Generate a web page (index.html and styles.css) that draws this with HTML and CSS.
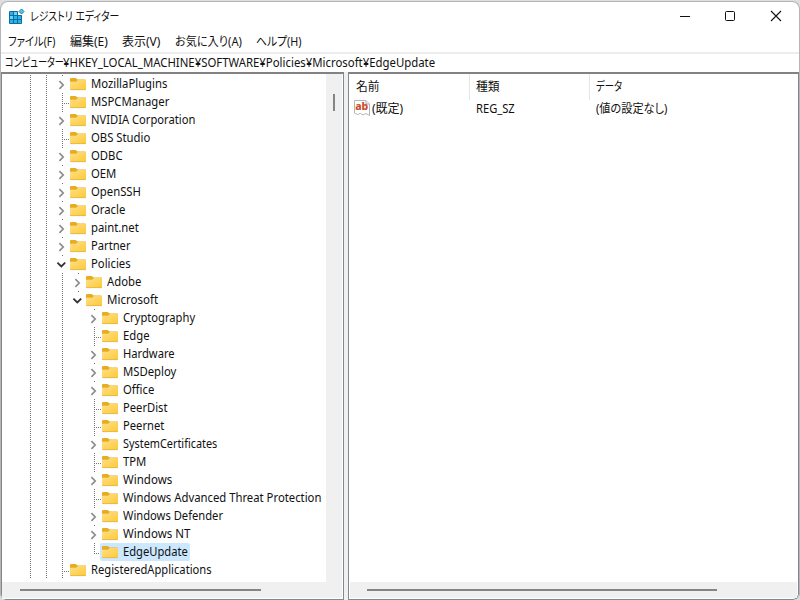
FILE: index.html
```html
<!DOCTYPE html>
<html lang="ja">
  <head>
    <meta charset="UTF-8" />
    <meta name="viewport" content="width=device-width, initial-scale=1.0" />
    <title>レジストリ エディター</title>
    <link rel="stylesheet" href="styles.css" />
  </head>
  <body>
    <svg class="defs" width="0" height="0">
      <defs>
        <linearGradient id="fold" x1="0" y1="0" x2="1" y2="1">
          <stop offset="0" stop-color="#ffe08a" />
          <stop offset="1" stop-color="#fcc936" />
        </linearGradient>
        <symbol id="folder" viewBox="0 0 16 16">
          <path d="M0 3.2Q0 2 1.2 2H5.6L7.6 3.6H15Q16 3.6 16 4.6V8H0Z" fill="#e8ac22" />
          <path d="M0 5.8H6L8 4H15.2Q16 4 16 4.9V13.2Q16 14 15.2 14H.8Q0 14 0 13.2Z" fill="url(#fold)" />
          <path d="M.3 13.6H15.7" stroke="#e3b23c" stroke-width=".8" />
        </symbol>
        <symbol id="closed" viewBox="0 0 16 18">
          <path d="M5.4 6.2L9.2 10L5.4 13.8" fill="none" stroke="#8c8c8c" stroke-width="1.7" />
        </symbol>
        <symbol id="open" viewBox="0 0 16 18">
          <path d="M3.4 7.6L7.3 11.4L11.2 7.6" fill="none" stroke="#333" stroke-width="1.8" />
        </symbol>
      </defs>
    </svg>

    <div class="window">
      <div class="titlebar">
        <svg class="app-icon" width="17" height="17" viewBox="0 0 17 17">
          <path d="M1.5 3.5H9.5V7.5H13.5V15.5H1.5Z" fill="#25b5ea" stroke="#126b9c" />
          <path d="M2 8H5V11H2ZM6 4H9V7H6Z" fill="#62d7fa" />
          <path d="M1.5 7.5H13.5M1.5 11.5H13.5M5.5 3.5V15.5M9.5 7V15.5" stroke="#126b9c" />
          <path d="M13.5 1L16 3.5L13.5 6L11 3.5Z" fill="#50c8ef" stroke="#237ba8" />
        </svg>
        <div class="title"><span>レジストリ エディター</span></div>
        <div class="controls">
          <svg width="45" height="28" viewBox="0 0 45 28">
            <path d="M17 14.5H27" stroke="#111" />
          </svg>
          <svg width="45" height="28" viewBox="0 0 45 28">
            <rect x="17.5" y="9.5" width="9" height="9" rx="1" fill="none" stroke="#111" />
          </svg>
          <svg width="45" height="28" viewBox="0 0 45 28">
            <path d="M18 9L28 19M28 9L18 19" stroke="#111" stroke-width="1.1" />
          </svg>
        </div>
      </div>

      <div class="menubar">
        <div class="menu file"><span>ファイル(F)</span></div>
        <div class="menu edit"><span>編集(E)</span></div>
        <div class="menu view"><span>表示(V)</span></div>
        <div class="menu favorites"><span>お気に入り(A)</span></div>
        <div class="menu help"><span>ヘルプ(H)</span></div>
      </div>

      <div class="address">
        <div class="computer"><span>コンピューター</span></div>
        <div class="path"><span>¥HKEY_LOCAL_MACHINE¥SOFTWARE¥Policies¥Microsoft¥EdgeUpdate</span></div>
      </div>

      <div class="panes">
        <div class="tree-pane">
          <div class="tree-view">
            <ul class="tree">
              <li><i class="guide"></i><i class="guide"></i><svg class="twisty"><use href="#closed" /></svg><div class="key"><svg class="folder"><use href="#folder" /></svg><span>MozillaPlugins</span></div></li>
              <li><i class="guide"></i><i class="guide"></i><i class="guide leaf"></i><div class="key"><svg class="folder"><use href="#folder" /></svg><span>MSPCManager</span></div></li>
              <li><i class="guide"></i><i class="guide"></i><svg class="twisty"><use href="#closed" /></svg><div class="key tight"><svg class="folder"><use href="#folder" /></svg><span>NVIDIA Corporation</span></div></li>
              <li><i class="guide"></i><i class="guide"></i><i class="guide leaf"></i><div class="key"><svg class="folder"><use href="#folder" /></svg><span>OBS Studio</span></div></li>
              <li><i class="guide"></i><i class="guide"></i><svg class="twisty"><use href="#closed" /></svg><div class="key"><svg class="folder"><use href="#folder" /></svg><span>ODBC</span></div></li>
              <li><i class="guide"></i><i class="guide"></i><svg class="twisty"><use href="#closed" /></svg><div class="key"><svg class="folder"><use href="#folder" /></svg><span>OEM</span></div></li>
              <li><i class="guide"></i><i class="guide"></i><svg class="twisty"><use href="#closed" /></svg><div class="key"><svg class="folder"><use href="#folder" /></svg><span>OpenSSH</span></div></li>
              <li><i class="guide"></i><i class="guide"></i><svg class="twisty"><use href="#closed" /></svg><div class="key"><svg class="folder"><use href="#folder" /></svg><span>Oracle</span></div></li>
              <li><i class="guide"></i><i class="guide"></i><svg class="twisty"><use href="#closed" /></svg><div class="key"><svg class="folder"><use href="#folder" /></svg><span>paint.net</span></div></li>
              <li><i class="guide"></i><i class="guide"></i><svg class="twisty"><use href="#closed" /></svg><div class="key tight"><svg class="folder"><use href="#folder" /></svg><span>Partner</span></div></li>
              <li><i class="guide"></i><i class="guide"></i><svg class="twisty"><use href="#open" /></svg><div class="key"><svg class="folder"><use href="#folder" /></svg><span>Policies</span></div></li>
              <li><i class="guide"></i><i class="guide"></i><i class="guide"></i><svg class="twisty"><use href="#closed" /></svg><div class="key"><svg class="folder"><use href="#folder" /></svg><span>Adobe</span></div></li>
              <li><i class="guide"></i><i class="guide"></i><i class="guide"></i><svg class="twisty"><use href="#open" /></svg><div class="key wide"><svg class="folder"><use href="#folder" /></svg><span>Microsoft</span></div></li>
              <li><i class="guide"></i><i class="guide"></i><i class="guide"></i><i class="blank"></i><svg class="twisty"><use href="#closed" /></svg><div class="key tight"><svg class="folder"><use href="#folder" /></svg><span>Cryptography</span></div></li>
              <li><i class="guide"></i><i class="guide"></i><i class="guide"></i><i class="blank"></i><i class="guide leaf"></i><div class="key"><svg class="folder"><use href="#folder" /></svg><span>Edge</span></div></li>
              <li><i class="guide"></i><i class="guide"></i><i class="guide"></i><i class="blank"></i><svg class="twisty"><use href="#closed" /></svg><div class="key tight"><svg class="folder"><use href="#folder" /></svg><span>Hardware</span></div></li>
              <li><i class="guide"></i><i class="guide"></i><i class="guide"></i><i class="blank"></i><svg class="twisty"><use href="#closed" /></svg><div class="key"><svg class="folder"><use href="#folder" /></svg><span>MSDeploy</span></div></li>
              <li><i class="guide"></i><i class="guide"></i><i class="guide"></i><i class="blank"></i><svg class="twisty"><use href="#closed" /></svg><div class="key"><svg class="folder"><use href="#folder" /></svg><span>Office</span></div></li>
              <li><i class="guide"></i><i class="guide"></i><i class="guide"></i><i class="blank"></i><i class="guide leaf"></i><div class="key tight"><svg class="folder"><use href="#folder" /></svg><span>PeerDist</span></div></li>
              <li><i class="guide"></i><i class="guide"></i><i class="guide"></i><i class="blank"></i><i class="guide leaf"></i><div class="key tight"><svg class="folder"><use href="#folder" /></svg><span>Peernet</span></div></li>
              <li><i class="guide"></i><i class="guide"></i><i class="guide"></i><i class="blank"></i><svg class="twisty"><use href="#closed" /></svg><div class="key tighter"><svg class="folder"><use href="#folder" /></svg><span>SystemCertificates</span></div></li>
              <li><i class="guide"></i><i class="guide"></i><i class="guide"></i><i class="blank"></i><i class="guide leaf"></i><div class="key"><svg class="folder"><use href="#folder" /></svg><span>TPM</span></div></li>
              <li><i class="guide"></i><i class="guide"></i><i class="guide"></i><i class="blank"></i><svg class="twisty"><use href="#closed" /></svg><div class="key wide"><svg class="folder"><use href="#folder" /></svg><span>Windows</span></div></li>
              <li><i class="guide"></i><i class="guide"></i><i class="guide"></i><i class="blank"></i><i class="guide leaf"></i><div class="key"><svg class="folder"><use href="#folder" /></svg><span>Windows Advanced Threat Protection</span></div></li>
              <li><i class="guide"></i><i class="guide"></i><i class="guide"></i><i class="blank"></i><svg class="twisty"><use href="#closed" /></svg><div class="key tight"><svg class="folder"><use href="#folder" /></svg><span>Windows Defender</span></div></li>
              <li><i class="guide"></i><i class="guide"></i><i class="guide"></i><i class="blank"></i><svg class="twisty"><use href="#closed" /></svg><div class="key wide"><svg class="folder"><use href="#folder" /></svg><span>Windows NT</span></div></li>
              <li><i class="guide"></i><i class="guide"></i><i class="guide"></i><i class="blank"></i><i class="guide leaf last"></i><div class="key tight selected"><svg class="folder"><use href="#folder" /></svg><span>EdgeUpdate</span></div></li>
              <li><i class="guide"></i><i class="guide"></i><i class="guide leaf"></i><div class="key tight"><svg class="folder"><use href="#folder" /></svg><span>RegisteredApplications</span></div></li>
            </ul>
            <div class="v-scroll"><div class="thumb"></div></div>
          </div>
          <div class="h-scroll"><div class="thumb"></div></div>
        </div>

        <div class="value-pane">
          <div class="values">
            <div class="row head">
              <div class="cell kanji"><span>名前</span></div>
              <div class="cell kanji"><span>種類</span></div>
              <div class="cell data"><span>データ</span></div>
            </div>
            <div class="row">
              <div class="cell name">
                <svg class="string-icon" width="16" height="16" viewBox="0 0 16 16">
                  <path d="M.5 .5H12L15.5 4V15.5L12 13.5L9 15L6.5 13.5L3.5 14.5L.5 13Z" fill="#fff" stroke="#b5b5b5" />
                  <path d="M12 .5V4H15.5" fill="#eee" stroke="#b5b5b5" />
                  <text x="1.2" y="10">ab</text>
                </svg>
                <span>(既定)</span>
              </div>
              <div class="cell type"><span>REG_SZ</span></div>
              <div class="cell unset"><span>(値の設定なし)</span></div>
            </div>
          </div>
          <div class="h-scroll"><div class="thumb"></div></div>
        </div>
      </div>
    </div>
  </body>
</html>
```
FILE: styles.css
```css
* {
  box-sizing: border-box;
}
body {
  display: flow-root;
  margin: 0;
  height: 600px;
  overflow: hidden;
  background-color: #dedede;
  font-family: "Noto Sans", "Noto Sans CJK JP", sans-serif;
  font-size: 12px;
  line-height: 18px;
  color: #111;
}
.defs {
  position: absolute;
}
.window {
  display: flex;
  flex-direction: column;
  width: 800px;
  height: 599px;
  margin-top: 1px;
  border: 1px solid #b5b5b5;
  border-bottom: none;
  border-radius: 8px 8px 6px 6px;
  background-color: #fff;
  overflow: hidden;
}

/* labels are squeezed to the narrow UI font */
span {
  display: inline-block;
  white-space: nowrap;
  transform-origin: left center;
}

.titlebar {
  display: flex;
  height: 31px;
  padding: 0 1px 0 7px;
}
.app-icon {
  margin-top: 6px;
}
.title {
  flex: 1;
  padding: 6px 0 0 5px;
}
.title span {
  font-feature-settings: "palt";
  transform: scaleX(0.82);
}
.controls {
  display: flex;
}

.menubar {
  display: flex;
  height: 19px;
  padding-left: 7px;
}
.menu span {
  font-feature-settings: "palt";
  transform: scaleX(0.93);
}
.menu.file span {
  transform: scaleX(0.86);
}
.menu.edit span,
.menu.view span {
  transform: scaleX(1);
}
.file {
  width: 62px;
}
.edit {
  width: 52px;
}
.view {
  width: 53px;
}
.favorites {
  width: 81px;
}
.menu.help span {
  transform: scaleX(0.9);
}

.address {
  display: flex;
  height: 20px;
  border-top: 2px solid #ededed;
  padding-left: 4px;
}
.computer {
  width: 58px;
}
.computer span {
  font-feature-settings: "palt";
  transform: scaleX(0.76);
}
.path span {
  transform: scaleX(0.948);
}

.panes {
  display: flex;
  flex: 1;
  gap: 4px;
  min-height: 0;
  background-color: #f0f0f0;
}
.tree-pane,
.value-pane {
  display: flex;
  flex-direction: column;
  padding: 0 1px 1px;
  border: 1px solid #828790;
  border-top: 2px solid #828282;
  background-color: #fff;
}
.tree-pane {
  flex: none;
  width: 343px;
  padding-left: 0;
}
.value-pane {
  flex: 1;
  border-bottom-right-radius: 6px;
}
.tree-view {
  display: flex;
  flex: 1;
}
.tree {
  flex: 1;
  min-width: 0;
  margin: 0;
  padding: 1px 0 0 20px;
  list-style: none;
  overflow: hidden;
}
.tree li {
  display: flex;
  height: 18px;
}
.guide,
.twisty,
.blank {
  flex: none;
  width: 16px;
  height: 18px;
}
.guide {
  background: repeating-linear-gradient(#777 0 1px, transparent 1px 2px) 8px 0 / 1px 100% no-repeat;
}
.leaf {
  background:
    repeating-linear-gradient(#777 0 1px, transparent 1px 2px) 8px 0 / 1px 100% no-repeat,
    repeating-linear-gradient(90deg, #777 0 1px, transparent 1px 2px) 8px 10px / 8px 1px no-repeat;
}
.last {
  background-size: 1px 10px, 8px 1px;
}
.twisty {
  background: linear-gradient(#777, #777) 8px 0 / 1px 1px no-repeat;
}
.key {
  display: flex;
  flex: none;
  margin-left: -2px;
  padding: 0 3px 0 2px;
}
.key span {
  transform: scaleX(0.942);
}
.key.tight span {
  transform: scaleX(0.932);
}
.key.tighter span {
  transform: scaleX(0.906);
}
.key.wide span {
  transform: scaleX(0.96);
}
.selected {
  width: 90px;
  background-color: #cce8ff;
  border-radius: 2px;
}
.folder {
  flex: none;
  width: 16px;
  height: 16px;
  margin: 1px 5px 0 0;
}

.v-scroll {
  flex: none;
  width: 16px;
  background-color: #f0f0f0;
  padding: 20px 0 0 7px;
}
.v-scroll .thumb {
  width: 2px;
  height: 17px;
  background-color: #858585;
}
.h-scroll {
  flex: none;
  height: 16px;
  padding: 7px 0 0 18px;
  background-color: #f0f0f0;
}
.h-scroll .thumb {
  width: 241px;
  height: 2px;
  background-color: #858585;
}
.value-pane .h-scroll {
  padding-left: 17px;
}
.value-pane .h-scroll .thumb {
  width: 350px;
}

.values {
  flex: 1;
}
.row {
  display: grid;
  grid-template-columns: 120px 120px 1fr;
  height: 18px;
}
.head {
  height: 26px;
}
.cell {
  padding-left: 6px;
}
.head .cell {
  padding-top: 4px;
}
.head .cell:not(:last-child) {
  border-right: 1px solid #e5e5e5;
}
.kanji span {
  transform: scaleX(0.98);
}
.data span {
  font-feature-settings: "palt";
  transform: scaleX(0.78);
}
.cell.name {
  display: flex;
  padding-left: 4px;
}
.string-icon {
  margin-right: 2px;
}
.string-icon text {
  font: 800 10.5px "Noto Sans", sans-serif;
  fill: #c8502d;
}
.type span {
  transform: scaleX(0.93);
}
.unset span {
  font-feature-settings: "palt";
  transform: scaleX(0.93);
}
```
